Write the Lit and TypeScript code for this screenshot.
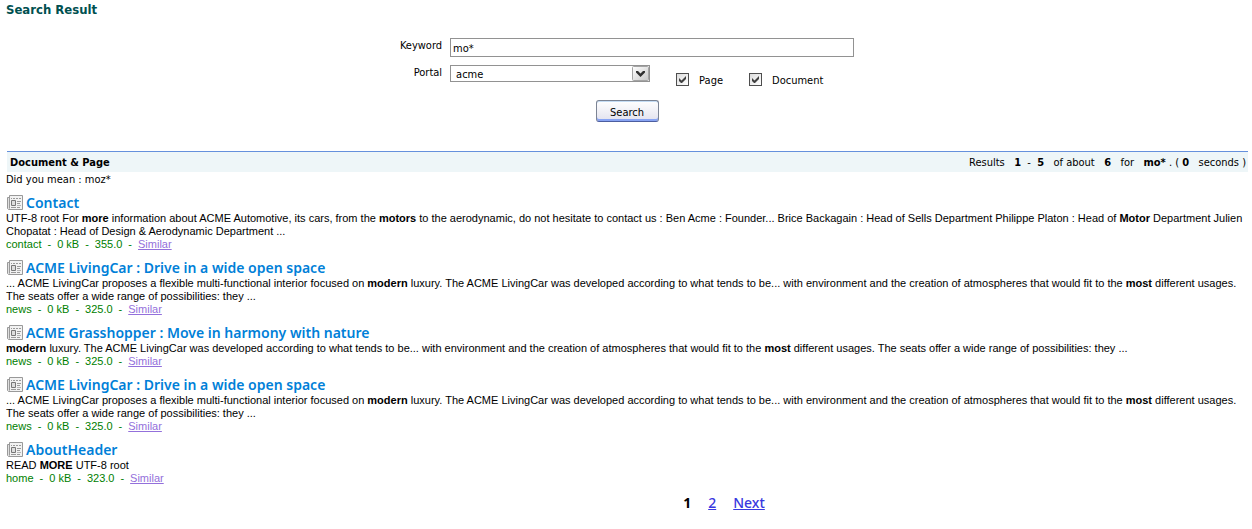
import { LitElement, html, css, TemplateResult } from "lit";
import { customElement, property } from "lit/decorators.js";

interface Result {
  title: string;
  snippet: TemplateResult;
  source: string;
  score: string;
}

const livingCar: Result = {
  title: "ACME LivingCar : Drive in a wide open space",
  snippet: html`... ACME LivingCar proposes a flexible multi-functional interior focused on <b>modern</b> luxury. The ACME LivingCar was developed according to what tends to be... with environment and the creation of atmospheres that would fit to the <b>most</b> different usages. The seats offer a wide range of possibilities: they ...`,
  source: "news",
  score: "325.0",
};

const results: Result[] = [
  {
    title: "Contact",
    snippet: html`UTF-8 root For <b>more</b> information about ACME Automotive, its cars, from the <b>motors</b> to the aerodynamic, do not hesitate to contact us : Ben Acme : Founder... Brice Backagain : Head of Sells Department Philippe Platon : Head of <b>Motor</b> Department Julien Chopatat : Head of Design &amp; Aerodynamic Department ...`,
    source: "contact",
    score: "355.0",
  },
  livingCar,
  {
    title: "ACME Grasshopper : Move in harmony with nature",
    snippet: html`<b>modern</b> luxury. The ACME LivingCar was developed according to what tends to be... with environment and the creation of atmospheres that would fit to the <b>most</b> different usages. The seats offer a wide range of possibilities: they ...`,
    source: "news",
    score: "325.0",
  },
  livingCar,
  {
    title: "AboutHeader",
    snippet: html`READ <b>MORE</b> UTF-8 root`,
    source: "home",
    score: "323.0",
  },
];

@customElement("search-hit")
class SearchHit extends LitElement {
  @property({ attribute: false }) result!: Result;

  static styles = css`
    :host { display: block; font-family: "Liberation Sans", Arial, sans-serif; }
    .title {
      display: flex;
      align-items: center;
      gap: 3px;
      margin: 0;
      font: 600 14px/18px "Noto Sans", sans-serif;
      color: #0080d8;
    }
    .icon { flex: none; display: block; }
    .snippet { margin: 0; }
    .meta { display: flex; gap: 6px; color: #008000; }
    .similar { color: #9370db; }
  `;

  render() {
    const r = this.result;
    return html`
      <h2 class="title">
        <svg class="icon" width="17" height="16" viewBox="0 0 17 16" aria-hidden="true">
          <path d="M3.500 .5h13v14h-14l-1-1v-11h2z" fill="#e0e0e0" stroke="#999" />
          <path d="M3.500 1v12.500" stroke="#999" />
          <path d="M4 1h12v13H4z" fill="#f2f2f2" />
          <path d="M5 3.5h1m1 0h2m1 0h2m1 0h2M11 6.500h4M11 8.500h3M5 12.500h5m1 0h3" stroke="#999" />
          <path d="M5.500 5.500h4v5h-4z" fill="#ddd" stroke="#777" />
          <path d="M11 10.500h4" stroke="#b4b4b4" />
        </svg>
        <span>${r.title}</span>
      </h2>
      <p class="snippet">${r.snippet}</p>
      <div class="meta">
        <span>${r.source}</span><span>-</span><span>0 kB</span><span>-</span><span>${r.score}</span><span>-</span>
        <a class="similar" href="#">Similar</a>
      </div>
    `;
  }
}

@customElement("app-root")
class AppRoot extends LitElement {
  static styles = css`
    :host {
      display: block;
      min-height: 100vh;
      box-sizing: border-box;
      padding: 2px 4px 8px 6px;
      background: #fff;
      color: #000;
      font: 11px/13px "DejaVu Sans Condensed", "DejaVu Sans", sans-serif;
    }
    .heading {
      margin: 0;
      font-size: 13px;
      line-height: 16px;
      color: #005050;
    }
    .form { margin-top: 20px; }
    .fields {
      display: grid;
      grid-template-columns: auto minmax(0, 404px);
      justify-content: center;
      gap: 8px;
    }
    .label { text-align: right; padding-top: 1px; }
    .text, .select {
      box-sizing: border-box;
      margin: 0;
      border: 1px solid #929292;
      border-radius: 0;
      background: #fff;
      color: #000;
      font: inherit;
    }
    .text { width: 100%; height: 19px; padding: 1px 2px 0; }
    .filters { display: flex; align-items: flex-start; }
    .picker { display: grid; width: 200px; }
    .picker > * { grid-area: 1 / 1; }
    .select {
      appearance: none;
      width: 100%;
      height: 17px;
      padding: 1px 20px 0 5px;
    }
    .arrow { justify-self: end; pointer-events: none; }
    .check {
      display: flex;
      gap: 10px;
      margin: 8px 0 0 26px;
      line-height: 15px;
    }
    .box { display: grid; width: 13px; height: 13px; }
    .box > * { grid-area: 1 / 1; }
    .tick {
      appearance: none;
      box-sizing: border-box;
      width: 13px;
      height: 13px;
      margin: 0;
      border: 1px solid #4e4e4e;
      background: linear-gradient(135deg, #dcdcdc, #fff);
    }
    .mark { pointer-events: none; visibility: hidden; }
    .tick:checked + .mark { visibility: visible; }
    .actions { display: flex; justify-content: center; margin-top: 12px; }
    .button {
      display: block;
      box-sizing: border-box;
      width: 63px;
      height: 22px;
      padding: 3px 0 0;
      border: 1px solid #7c8494;
      border-bottom-color: #4c5ea0;
      border-radius: 3px;
      background: linear-gradient(#fff, #e2e2ee);
      box-shadow: inset 0 1px #c4dcf4, inset 0 -2px #88a4f4;
      color: #000;
      font: inherit;
    }
    .bar {
      display: flex;
      justify-content: space-between;
      align-items: center;
      margin: 29px 0 0 1px;
      padding: 4px 2px 3px 3px;
      border-top: 1px solid #6590dc;
      background: #eef6f8;
    }
    .bar-title { margin: 0; font-size: 11px; }
    .stats { white-space: pre; }
    .suggest { margin: 1px 0 8px; }
    .hits { display: grid; gap: 8px; }
    .pager {
      display: flex;
      justify-content: center;
      gap: 17px;
      margin: 10px 0 0 194px;
      font: 500 14px/16px "Noto Sans", sans-serif;
    }
    .page { color: #3838e0; }
  `;

  private check(name: string) {
    return html`
      <label class="check">
        <span class="box">
          <input class="tick" type="checkbox" name=${name} checked />
          <svg class="mark" width="13" height="13" viewBox="0 0 13 13" aria-hidden="true">
            <path d="M3 5v3l2 2h1l4-4V3L5.500 7.500z" fill="#404040" />
          </svg>
        </span>
        ${name}
      </label>
    `;
  }

  render() {
    return html`
      <h1 class="heading">Search Result</h1>
      <form class="form" @submit=${(e: Event) => e.preventDefault()}>
        <div class="fields">
          <label class="label" for="keyword">Keyword</label>
          <input class="text" id="keyword" type="text" value="mo*" />
          <label class="label" for="portal">Portal</label>
          <div class="filters">
            <div class="picker">
              <select class="select" id="portal"><option>acme</option></select>
              <svg class="arrow" width="19" height="17" viewBox="0 0 19 17" aria-hidden="true">
                <defs>
                  <linearGradient id="face" x2="1" y2="1">
                    <stop offset="0" stop-color="#fff" />
                    <stop offset="1" stop-color="#c8c8c8" />
                  </linearGradient>
                </defs>
                <rect x="1.500" y="1.500" width="16" height="14" rx="1" fill="url(#face)" stroke="#a4a4a4" />
                <path d="M5 6h2l2.500 2.500L12 6h2v1.500L9.500 12 5 7.500z" fill="#303030" />
                <path d="M18.500 0v17M0 .5h19M0 16.500h19" stroke="#929292" />
              </svg>
            </div>
            ${this.check("Page")}${this.check("Document")}
          </div>
        </div>
        <div class="actions"><button class="button">Search</button></div>
      </form>

      <div class="bar">
        <h2 class="bar-title">Document &amp; Page</h2>
        <span class="stats">Results   <b>1</b>  -  <b>5</b>   of about   <b>6</b>   for   <b>mo*</b> . ( <b>0</b>   seconds )</span>
      </div>
      <p class="suggest">Did you mean : moz*</p>
      <div class="hits">
        ${results.map((r) => html`<search-hit .result=${r}></search-hit>`)}
      </div>
      <nav class="pager">
        <b>1</b>
        <a class="page" href="#">2</a>
        <a class="page" href="#">Next</a>
      </nav>
    `;
  }
}
